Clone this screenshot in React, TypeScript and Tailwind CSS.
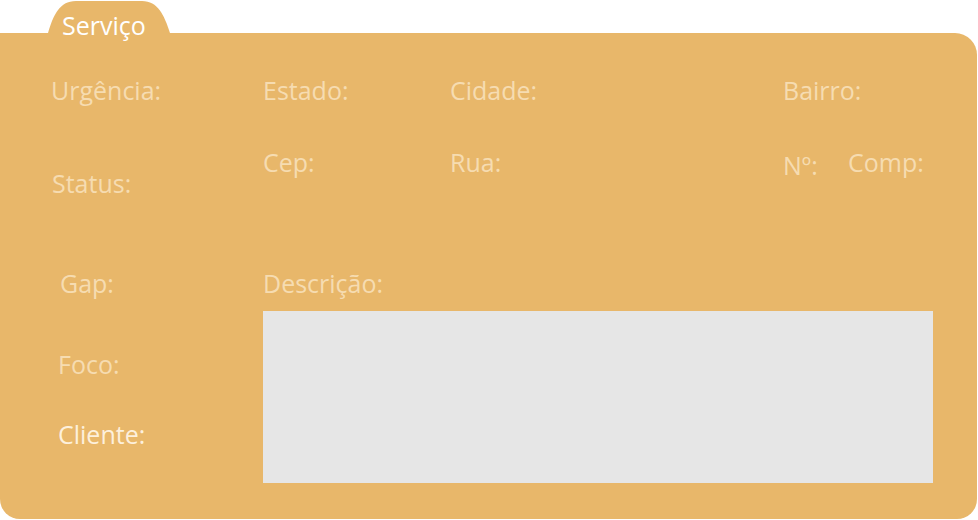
const label = "text-[25px] leading-[34px] text-[#f6dcb1] whitespace-nowrap";

function Tab() {
  return (
    <div className="relative ml-[48px] h-[33px] w-[122px]">
      <svg className="absolute inset-0" width="122" height="33" viewBox="0 0 122 33">
        <path d="M0 33 C5 16 11 1 28 1 L94 1 C110 1 116 15 122 33 Z" fill="#e8b76a" />
      </svg>
      <div className="relative pl-[14px] pt-[8px] text-[25px] leading-[34px] text-white">Serviço</div>
    </div>
  );
}

export default function App() {
  return (
    <div className="w-[978px] h-[520px] bg-white" style={{ fontFamily: '"Open Sans", sans-serif' }}>
      <Tab />
      <div className="flex w-[977px] h-[486px] bg-[#e8b76a] rounded-tr-[22px] rounded-b-[20px]">
        {/* left column */}
        <div className="w-[263px] flex flex-col items-start">
          <div className={`${label} mt-[40px] ml-[51px]`}>Urgência:</div>
          <div className={`${label} mt-[59px] ml-[52px]`}>Status:</div>
          <div className={`${label} mt-[66px] ml-[60px]`}>Gap:</div>
          <div className={`${label} mt-[47px] ml-[58px]`}>Foco:</div>
          <div className="text-[25px] leading-[34px] text-[#fdf0dc] mt-[36px] ml-[58px]">Cliente:</div>
        </div>

        {/* right column */}
        <div className="flex-1 flex flex-col pt-[40px]">
          <div className="grid grid-cols-[187px_333px_1fr]">
            <div className={label}>Estado:</div>
            <div className={label}>Cidade:</div>
            <div className={label}>Bairro:</div>
          </div>
          <div className="grid grid-cols-[187px_333px_1fr] items-start mt-[38px]">
            <div className={label}>Cep:</div>
            <div className={label}>Rua:</div>
            <div className="flex items-start">
              <div className={`${label} w-[65px] mt-[3px]`}>Nº:</div>
              <div className={label}>Comp:</div>
            </div>
          </div>
          <div className={`${label} mt-[84px]`}>Descrição:</div>
          <div className="mt-[11px] w-[670px] h-[172px] bg-[#e6e6e6]" />
        </div>
      </div>
    </div>
  );
}
